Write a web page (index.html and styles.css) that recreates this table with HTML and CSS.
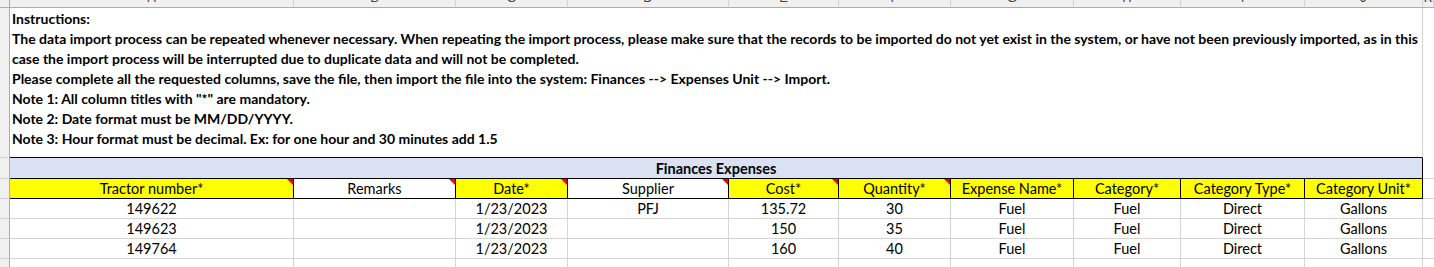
FILE: index.html
```html
<!DOCTYPE html>
<html lang="en">
<head>
<meta charset="utf-8">
<title>Finances Expenses import</title>
<link rel="stylesheet" href="styles.css">
</head>
<body>
<div class="sheet">
  <div class="corner"></div>
  <div class="ch"><span>A</span></div>
  <div class="ch"><span>B</span></div>
  <div class="ch"><span>C</span></div>
  <div class="ch"><span>D</span></div>
  <div class="ch"><span>E</span></div>
  <div class="ch"><span>F</span></div>
  <div class="ch"><span>G</span></div>
  <div class="ch"><span>H</span></div>
  <div class="ch"><span>I</span></div>
  <div class="ch"><span>J</span></div>
  <div class="ch"><span>K</span></div>

  <div class="rh"></div>
  <div class="instr">
    <div class="line">Instructions:</div>
    <div class="line">The data import process can be repeated whenever necessary. When repeating the import process, please make sure that the records to be imported do not yet exist in the system, or have not been previously imported, as in this</div>
    <div class="line">case the import process will be interrupted due to duplicate data and will not be completed.</div>
    <div class="line">Please complete all the requested columns, save the file, then import the file into the system: Finances --&gt; Expenses Unit --&gt; Import.</div>
    <div class="line">Note 1: All column titles with "*" are mandatory.</div>
    <div class="line">Note 2: Date format must be MM/DD/YYYY.</div>
    <div class="line">Note 3: Hour format must be decimal. Ex: for one hour and 30 minutes add 1.5</div>
  </div>
  <div class="k k-plain"></div>

  <div class="rh"></div>
  <div class="title">Finances Expenses</div>
  <div class="k"></div>

  <div class="rh"></div>
  <div class="hd req note">Tractor number*</div>
  <div class="hd note">Remarks</div>
  <div class="hd req note">Date*</div>
  <div class="hd note">Supplier</div>
  <div class="hd req note">Cost*</div>
  <div class="hd req note">Quantity*</div>
  <div class="hd req">Expense Name*</div>
  <div class="hd req">Category*</div>
  <div class="hd req">Category Type*</div>
  <div class="hd req last">Category Unit*</div>
  <div class="k"></div>

  <div class="rh"></div>
  <div class="td">149622</div>
  <div class="td"></div>
  <div class="td">1/23/2023</div>
  <div class="td">PFJ</div>
  <div class="td">135.72</div>
  <div class="td">30</div>
  <div class="td">Fuel</div>
  <div class="td">Fuel</div>
  <div class="td">Direct</div>
  <div class="td">Gallons</div>
  <div class="k"></div>

  <div class="rh"></div>
  <div class="td">149623</div>
  <div class="td"></div>
  <div class="td">1/23/2023</div>
  <div class="td"></div>
  <div class="td">150</div>
  <div class="td">35</div>
  <div class="td">Fuel</div>
  <div class="td">Fuel</div>
  <div class="td">Direct</div>
  <div class="td">Gallons</div>
  <div class="k"></div>

  <div class="rh"></div>
  <div class="td">149764</div>
  <div class="td"></div>
  <div class="td">1/23/2023</div>
  <div class="td"></div>
  <div class="td">160</div>
  <div class="td">40</div>
  <div class="td">Fuel</div>
  <div class="td">Fuel</div>
  <div class="td">Direct</div>
  <div class="td">Gallons</div>
  <div class="k"></div>

  <div class="rh rh-last"></div>
  <div class="td td-open"></div>
  <div class="td td-open"></div>
  <div class="td td-open"></div>
  <div class="td td-open"></div>
  <div class="td td-open"></div>
  <div class="td td-open"></div>
  <div class="td td-open"></div>
  <div class="td td-open"></div>
  <div class="td td-open"></div>
  <div class="td td-open"></div>
  <div class="k k-open"></div>
</div>
</body>
</html>
```

FILE: styles.css
```css
* { box-sizing: border-box; }

html, body {
  margin: 0;
  padding: 0;
  background: #ffffff;
}

body {
  width: 1434px;
  height: 267px;
  overflow: hidden;
  font-family: Lato, "Liberation Sans", sans-serif;
  font-size: 14.5px;
  color: #000000;
}

.sheet {
  display: grid;
  grid-template-columns: 10px 284px 162px 112px 161px 110px 112px 123px 107px 124px 118px 1fr;
  grid-template-rows: 8px 150px 21px 20px 20px 20px 20px 1fr;
  width: 1434px;
  height: 267px;
}

/* column header strip */
.corner {
  background: #f0f0f0;
  border-right: 1px solid #ababab;
  border-bottom: 1px solid #ababab;
}

.ch {
  background: #f0f0f0;
  border-right: 1px solid #d2d2d2;
  border-bottom: 1px solid #ababab;
  overflow: hidden;
  display: flex;
  justify-content: center;
  align-items: flex-end;
}

.ch span {
  font-family: "Liberation Sans", sans-serif;
  font-size: 13px;
  line-height: 14px;
  color: #444444;
  margin-bottom: 2px;
}

/* row header strip */
.rh {
  background: #f0f0f0;
  border-right: 1px solid #ababab;
  border-bottom: 1px solid #d2d2d2;
}

.rh-last {
  border-bottom: none;
}

/* instructions block */
.instr {
  grid-column: 2 / 12;
  border-bottom: 1px solid #000000;
  border-right: 1px solid #d4d4d4;
  padding-left: 2px;
  font-size: 14px;
  font-weight: 700;
  overflow: hidden;
}

.line {
  height: 20px;
  line-height: 21px;
  white-space: nowrap;
}

/* title band */
.title {
  grid-column: 2 / 12;
  background: #d9e1f2;
  border-bottom: 1px solid #000000;
  border-right: 1px solid #000000;
  font-weight: 700;
  text-align: center;
  line-height: 21px;
}

/* column titles */
.hd {
  position: relative;
  background: #ffffff;
  border-right: 1px solid #000000;
  border-bottom: 1px solid #000000;
  text-align: center;
  line-height: 20px;
  white-space: nowrap;
  overflow: hidden;
}

.hd.req {
  background: #ffff00;
}

.hd.note::after {
  content: "";
  position: absolute;
  top: 0;
  right: 0;
  width: 0;
  height: 0;
  border-top: 6px solid #ff0000;
  border-left: 6px solid transparent;
}

/* data cells */
.td {
  border-right: 1px solid #d4d4d4;
  border-bottom: 1px solid #d4d4d4;
  text-align: center;
  line-height: 20px;
  white-space: nowrap;
}

.td-open {
  border-bottom: none;
}

/* spare column past the table */
.k {
  border-bottom: 1px solid #d4d4d4;
}

.k-plain,
.k-open {
  border-bottom: none;
}
```
